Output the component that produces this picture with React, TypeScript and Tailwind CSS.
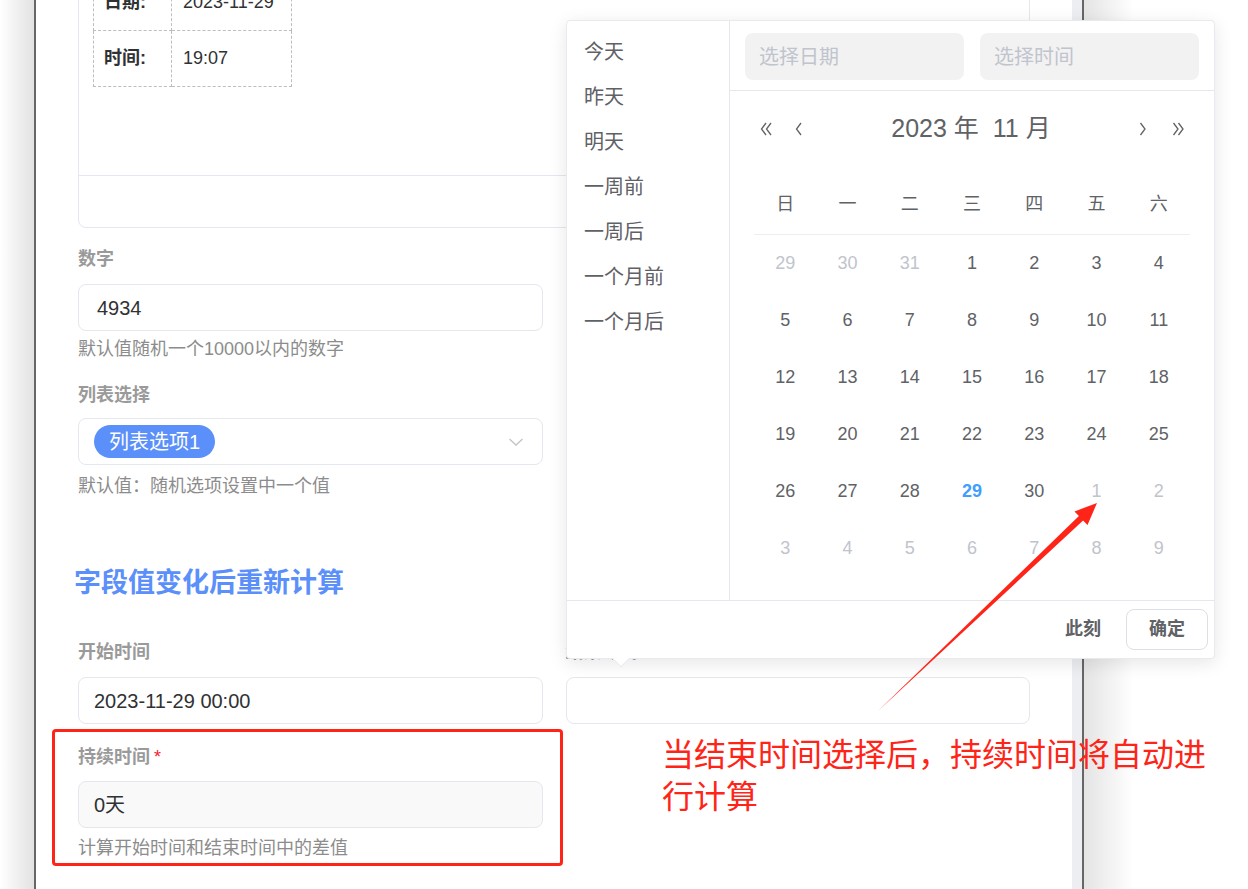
import React from 'react';

const FONT = { fontFamily: '"Liberation Sans", "Noto Sans CJK SC", sans-serif' };

const shortcuts = ['今天', '昨天', '明天', '一周前', '一周后', '一个月前', '一个月后'];
const weekdays = ['日', '一', '二', '三', '四', '五', '六'];

type Day = { n: number; muted?: boolean; today?: boolean };

const weeks: Day[][] = [
  [{ n: 29, muted: true }, { n: 30, muted: true }, { n: 31, muted: true }, { n: 1 }, { n: 2 }, { n: 3 }, { n: 4 }],
  [{ n: 5 }, { n: 6 }, { n: 7 }, { n: 8 }, { n: 9 }, { n: 10 }, { n: 11 }],
  [{ n: 12 }, { n: 13 }, { n: 14 }, { n: 15 }, { n: 16 }, { n: 17 }, { n: 18 }],
  [{ n: 19 }, { n: 20 }, { n: 21 }, { n: 22 }, { n: 23 }, { n: 24 }, { n: 25 }],
  [{ n: 26 }, { n: 27 }, { n: 28 }, { n: 29, today: true }, { n: 30 }, { n: 1, muted: true }, { n: 2, muted: true }],
  [3, 4, 5, 6, 7, 8, 9].map((n) => ({ n, muted: true })),
];

function Chevron({ dir, double }: { dir: 'left' | 'right'; double?: boolean }) {
  const one = dir === 'left' ? 'M7 2 L2.5 8 L7 14' : 'M2.5 2 L7 8 L2.5 14';
  const two = dir === 'left' ? 'M12 2 L7.5 8 L12 14' : 'M7.5 2 L12 8 L7.5 14';
  return (
    <svg width={double ? 15 : 10} height="16" viewBox={double ? '0 0 15 16' : '0 0 10 16'} fill="none">
      <path d={one} stroke="#606266" strokeWidth="1.3" />
      {double && <path d={two} stroke="#606266" strokeWidth="1.3" />}
    </svg>
  );
}

function Label({ children, required }: { children: React.ReactNode; required?: boolean }) {
  return (
    <div className="text-[18px] leading-[24px] font-bold text-[#9a9a9a]">
      {children}
      {required && <span className="ml-[4px] text-[#f5222d] font-normal">*</span>}
    </div>
  );
}

function Help({ children, className = '' }: { children: React.ReactNode; className?: string }) {
  return <div className={`text-[18px] leading-[24px] text-[#8c8c8c] ${className}`}>{children}</div>;
}

function DatePopup() {
  return (
    <div className="absolute left-[566px] top-[20px] w-[649px] h-[639px] bg-white border border-[#e8eaef] rounded-[4px] shadow-[0_4px_18px_rgba(0,0,0,0.1)] flex flex-col">
      <div className="flex flex-1 min-h-0">
        {/* shortcuts */}
        <div className="w-[164px] border-r border-[#e4e7ed] pt-[9px]">
          {shortcuts.map((s) => (
            <div key={s} className="h-[45px] leading-[45px] pl-[17px] text-[20px] text-[#5f6166]">
              {s}
            </div>
          ))}
        </div>
        {/* calendar */}
        <div className="flex-1 flex flex-col">
          <div className="h-[70px] border-b border-[#e4e7ed] flex gap-[16px] px-[15px] pt-[12px]">
            <div className="w-[219px] h-[47px] rounded-[8px] bg-[#f2f2f3] pl-[14px] flex items-center text-[20px] text-[#c0c4cc]">选择日期</div>
            <div className="w-[219px] h-[47px] rounded-[8px] bg-[#f2f2f3] pl-[14px] flex items-center text-[20px] text-[#c0c4cc]">选择时间</div>
          </div>
          <div className="mt-[16px] h-[44px] flex items-center">
            <div className="flex items-center gap-[20px] pl-[29px]">
              <Chevron dir="left" double />
              <Chevron dir="left" />
            </div>
            <div className="flex-1 text-center text-[25px] text-[#606266]">2023 年&nbsp;&nbsp;11 月</div>
            <div className="flex items-center gap-[23px] pr-[28px]">
              <Chevron dir="right" />
              <Chevron dir="right" double />
            </div>
          </div>
          <div className="mx-[24px] mt-[24px]">
            <div className="grid grid-cols-7 h-[60px] items-center border-b border-[#ebeef5]">
              {weekdays.map((w) => (
                <div key={w} className="text-center text-[18px] text-[#606266]">{w}</div>
              ))}
            </div>
            {weeks.map((row, i) => (
              <div key={i} className="grid grid-cols-7 h-[57px] items-center">
                {row.map((d, j) => (
                  <div
                    key={j}
                    className={`text-center text-[18px] ${d.today ? 'text-[#409eff] font-bold' : d.muted ? 'text-[#c0c4cc]' : 'text-[#606266]'}`}
                  >
                    {d.n}
                  </div>
                ))}
              </div>
            ))}
          </div>
        </div>
      </div>
      <div className="h-[58px] border-t border-[#e4e7ed] flex items-center justify-end pr-[6px]">
        <span className="mr-[25px] text-[18px] font-bold text-[#606266]">此刻</span>
        <div className="w-[82px] h-[41px] rounded-[8px] border border-[#dcdfe6] flex items-center justify-center text-[18px] font-bold text-[#606266]">
          确定
        </div>
      </div>
      <div className="absolute left-[48px] bottom-[-7px] w-[12px] h-[12px] rotate-45 bg-white border-r border-b border-[#e8eaef]" />
    </div>
  );
}

export default function App() {
  return (
    <div className="relative w-[1248px] h-[889px] overflow-hidden flex bg-white" style={FONT}>
      {/* window shadow left */}
      <div className="w-[34px] bg-gradient-to-r from-white to-[#e2e2e2]" />
      <div className="w-[2px] bg-[#666]" />

      {/* main page */}
      <div className="flex-1 bg-white px-[42px] min-w-0">
        <div className="-mt-[42px] border border-[#e4e7ed] rounded-[8px]">
          <div className="h-[216px] pt-[15px] pl-[14px]">
            <table className="border-collapse">
              <tbody>
                <tr className="h-[56px]">
                  <td className="w-[78px] border border-dashed border-[#bdbdbd] pl-[10px] text-[18px] font-bold text-[#303133]">日期:</td>
                  <td className="w-[120px] border border-dashed border-[#bdbdbd] pl-[11px] text-[18px] text-[#303133]">2023-11-29</td>
                </tr>
                <tr className="h-[56px]">
                  <td className="border border-dashed border-[#bdbdbd] pl-[10px] text-[18px] font-bold text-[#303133]">时间:</td>
                  <td className="border border-dashed border-[#bdbdbd] pl-[11px] text-[18px] text-[#303133]">19:07</td>
                </tr>
              </tbody>
            </table>
          </div>
          <div className="h-[52px] border-t border-[#e4e7ed]" />
        </div>

        <div className="grid grid-cols-2 gap-x-[23px]">
          <div>
            <div className="mt-[19px]">
              <Label>数字</Label>
              <div className="mt-[13px] h-[47px] rounded-[8px] border border-[#e4e7ed] px-[18px] flex items-center text-[20px] text-[#303133]">4934</div>
              <Help className="mt-[6px]">默认值随机一个10000以内的数字</Help>
            </div>
            <div className="mt-[22px]">
              <Label>列表选择</Label>
              <div className="mt-[11px] h-[47px] rounded-[8px] border border-[#e4e7ed] pl-[15px] pr-[18px] flex items-center justify-between">
                <span className="h-[33px] px-[15px] rounded-full bg-[#5b8ff9] text-white text-[20px] flex items-center">列表选项1</span>
                <svg width="16" height="10" viewBox="0 0 16 10" fill="none">
                  <path d="M1.5 2 L8 8 L14.5 2" stroke="#c0c4cc" strokeWidth="1.3" />
                </svg>
              </div>
              <Help className="mt-[9px]">默认值：随机选项设置中一个值</Help>
            </div>
          </div>
          <div />
        </div>

        <div className="mt-[67px] -ml-[4px] text-[27px] leading-[36px] font-bold text-[#5b8ff9]">字段值变化后重新计算</div>

        <div className="mt-[39px] grid grid-cols-2 gap-x-[23px]">
          <div>
            <Label>开始时间</Label>
            <div className="mt-[13px] h-[47px] rounded-[8px] border border-[#e4e7ed] px-[15px] flex items-center text-[20px] text-[#303133]">2023-11-29 00:00</div>
          </div>
          <div>
            <Label>结束时间</Label>
            <div className="mt-[13px] h-[47px] rounded-[8px] border border-[#e4e7ed]" />
          </div>
        </div>

        <div className="mt-[21px] grid grid-cols-2 gap-x-[23px]">
          <div className="relative">
            <Label required>持续时间</Label>
            <div className="mt-[12px] h-[47px] rounded-[8px] border border-[#e4e7ed] bg-[#f9f9fa] px-[15px] flex items-center text-[20px] text-[#303133]">0天</div>
            <Help className="mt-[8px]">计算开始时间和结束时间中的差值</Help>
            {/* annotation box */}
            <div className="absolute left-[-26px] top-[-16px] w-[511px] h-[137px] border-[3px] border-[#ff2418] rounded-[4px] pointer-events-none" />
          </div>
          <div />
        </div>
      </div>

      {/* scrollbar track and window edge */}
      <div className="w-[10px] bg-[#eceef2]" />
      <div className="w-[2px] bg-[#666]" />
      <div className="w-[164px] bg-gradient-to-r from-[#e4e4e4] via-white via-[30%] to-white" />

      <DatePopup />

      {/* annotation arrow */}
      <svg className="absolute left-0 top-0 pointer-events-none" width="1248" height="889" viewBox="0 0 1248 889">
        <polygon
          points="878,711 1078.9,516 1074.5,511.4 1097,503 1087.5,525 1083.1,520.4"
          fill="#ff2418"
        />
      </svg>

      <div className="absolute left-[662px] top-[734px] text-[32px] leading-[42px] text-[#ff2418] whitespace-nowrap">
        当结束时间选择后，持续时间将自动进
        <br />
        行计算
      </div>
    </div>
  );
}
